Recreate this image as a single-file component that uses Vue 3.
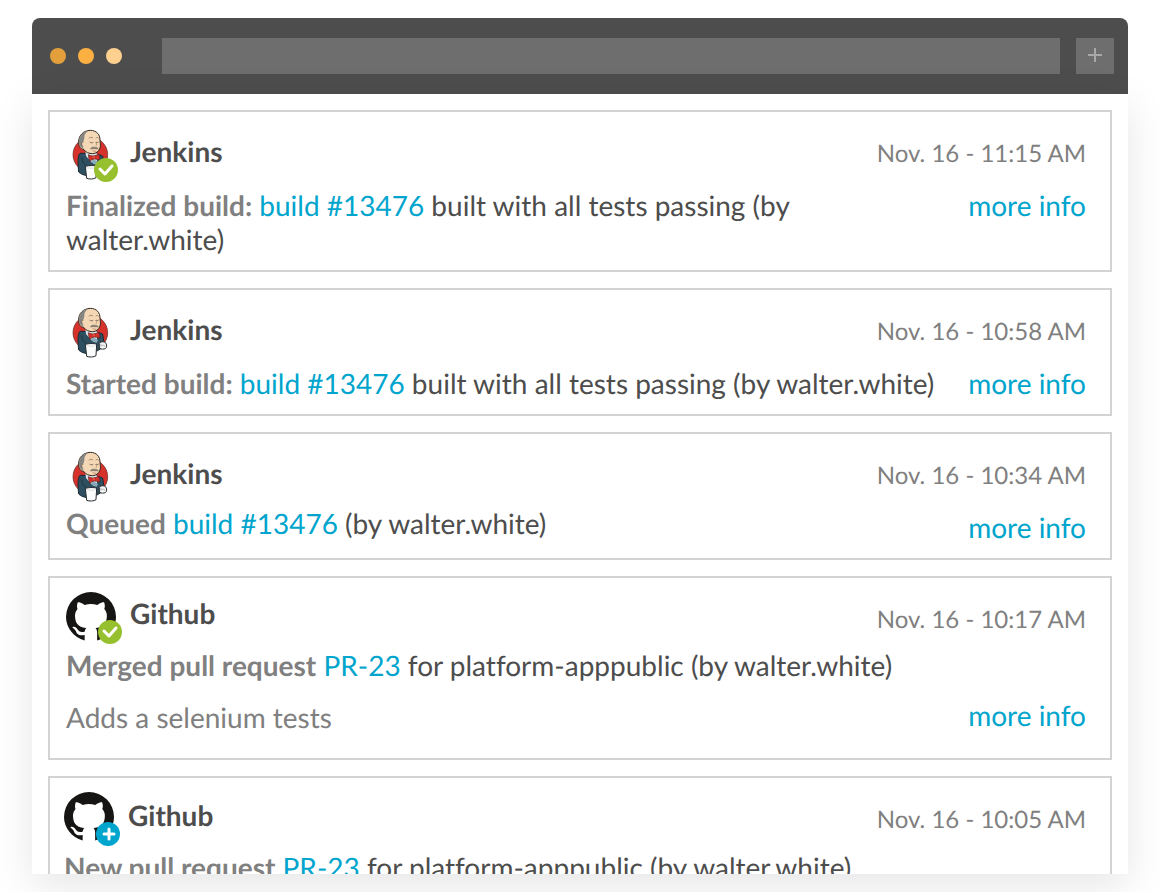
<script setup>
const events = [
  {
    id: 1, source: 'Jenkins', icon: 'jenkins', badge: 'check', variant: 'build',
    time: 'Nov. 16 - 11:15 AM', action: 'Finalized build:', ref: 'build #13476',
    detail: 'built with all tests passing (by walter.white)'
  },
  {
    id: 2, source: 'Jenkins', icon: 'jenkins', variant: 'build',
    time: 'Nov. 16 - 10:58 AM', action: 'Started build:', ref: 'build #13476',
    detail: 'built with all tests passing (by walter.white)'
  },
  {
    id: 3, source: 'Jenkins', icon: 'jenkins', variant: 'queued',
    time: 'Nov. 16 - 10:34 AM', action: 'Queued', ref: 'build #13476',
    detail: '(by walter.white)'
  },
  {
    id: 4, source: 'Github', icon: 'github', badge: 'check', variant: 'merged',
    time: 'Nov. 16 - 10:17 AM', action: 'Merged pull request', ref: 'PR-23',
    detail: 'for platform-apppublic (by walter.white)', note: 'Adds a selenium tests'
  },
  {
    id: 5, source: 'Github', icon: 'github', badge: 'plus', variant: 'opened',
    time: 'Nov. 16 - 10:05 AM', action: 'New pull request', ref: 'PR-23',
    detail: 'for platform-apppublic (by walter.white)'
  }
]
</script>

<template>
  <div class="window">
    <header class="toolbar">
      <div class="lights">
        <span class="light light--dark"></span>
        <span class="light light--mid"></span>
        <span class="light light--pale"></span>
      </div>
      <input class="address" type="text" aria-label="Address" />
      <button class="new-tab" type="button" aria-label="New tab">
        <svg width="14" height="14" viewBox="0 0 14 14" aria-hidden="true">
          <path d="M7 0v14M0 7h14" stroke="#a8a8a8" stroke-width="2" />
        </svg>
      </button>
    </header>

    <main class="feed">
      <article v-for="e in events" :key="e.id" class="card" :class="'card--' + e.variant">
        <div class="head">
          <div class="avatar" :class="'avatar--' + e.icon">
            <svg v-if="e.icon === 'jenkins'" width="52" height="54" viewBox="18 18 156 162" aria-hidden="true">
              <circle cx="91" cy="98" r="52" fill="#d7312b" stroke="#5a2522" stroke-width="2" />
              <path d="M60 94C53 101 53 124 56 150c6 6 14 9 22 10l34-8 14-8 6-16-4-26-16-6-26-2z" fill="#2d4f60" stroke="#1b2b34" stroke-width="3" />
              <path d="M76 86l2 16 18 20 14-2 4-20-8-10z" fill="#dfe6e8" />
              <path d="M56 62c-1-22 14-36 35-37 19 0 29 13 29 29 0 8 3 15 0 24-3 10-12 17-22 17-11 0-21-4-27-13-9 0-15-9-15-20z" fill="#f4d8b6" stroke="#33291f" stroke-width="3" />
              <path d="M57 60c0-18 11-29 27-33-8 6-12 12-11 22l-3 10-4 2 1 9 4 10c-9-2-14-10-14-20z" fill="#858582" />
              <path d="M70 61c-6-2-7 8-1 12" fill="#f4d8b6" stroke="#5b4435" stroke-width="2" />
              <path d="M86 49c4-4 9-4 13-1M107 48c3-2 6-2 9 1" fill="none" stroke="#7a6554" stroke-width="2" />
              <path d="M89 60c4 3 8 3 11 1M108 60c3 2 6 2 8 0" fill="none" stroke="#43372d" stroke-width="2" />
              <path d="M106 60c5 6 6 9 1 11" fill="none" stroke="#9d7353" stroke-width="2" />
              <path d="M91 81c4-7 9-7 14-5 5-1 8 1 10 5-5 0-10 0-13-1-4 0-7 2-11 1z" fill="#8d857a" stroke="#6b6157" stroke-width="1" />
              <path d="M98 86c4 2 7 2 11 1" fill="none" stroke="#a86551" stroke-width="2" />
              <path d="M85 98l14 5 18-6 3 16-17-2-15 6z" fill="#d8302c" stroke="#591f20" stroke-width="2" />
              <rect x="97" y="101" width="9" height="9" rx="2" fill="#ee4b40" stroke="#68201f" />
              <path d="M92 116l12-3 10 8-4 7-10-2z" fill="#8aa9b8" />
              <path d="M66 106c-1 10 3 18 12 24" fill="none" stroke="#1c343f" stroke-width="3" />
              <path d="M118 130c4-7 19-6 21 2 3 9-1 15-7 15-7 1-13 0-14-6z" fill="#f4f5f4" stroke="#303638" stroke-width="3" />
              <path d="M123 131l-1 7 7-3 6 4" fill="none" stroke="#969b9b" stroke-width="2" />
              <path d="M76 133c11-3 24-3 34-1l-2 35c-7 5-20 5-28 2z" fill="#fcfcfc" stroke="#242c30" stroke-width="3" />
              <path d="M79 137c10 2 20 2 28 0" fill="none" stroke="#c5cbcd" stroke-width="2" />
              <path d="M110 138c6-1 8 8 4 13-2 2-4 1-5-1" fill="none" stroke="#3b4448" stroke-width="3" />
            </svg>
            <svg v-else width="50" height="50" viewBox="0 0 16 16" aria-hidden="true">
              <path fill="#161514" d="M8 0A8 8 0 0 0 0 8c0 3.4 2.4 6.5 5.97 7.5v-1.78c-2.01.37-2.53-.49-2.69-.94-.15-.4-.5-.9-.82-1.13-.28-.15-.68-.52-.01-.53.63-.01 1.08.58 1.23.82.72 1.21 1.87.87 2.33.66.07-.52.28-.87.51-1.07-1.78-.2-3.64-.89-3.64-3.95 0-.87.31-1.59.82-2.15-.08-.2-.36-1.02.08-2.12 0 0 .67-.21 2.2.82a7.4 7.4 0 0 1 4 0c1.53-1.04 2.2-.82 2.2-.82.44 1.1.16 1.92.08 2.12.51.56.82 1.27.82 2.15 0 3.07-1.87 3.75-3.65 3.95.29.25.54.73.54 1.48v2.49C13.6 14.5 16 11.4 16 8a8 8 0 0 0-8-8z" />
            </svg>
            <svg v-if="e.badge" class="badge" width="24" height="24" viewBox="0 0 24 24" aria-hidden="true">
              <circle cx="12" cy="12" r="12" :fill="e.badge === 'check' ? '#97c02e' : '#00a5cd'" />
              <path :d="e.badge === 'check' ? 'M6 11l5 5 7-8' : 'M13 7v10M8 12h10'" fill="none" stroke="#fff" stroke-width="3" stroke-linecap="round" stroke-linejoin="round" />
            </svg>
          </div>
          <h2 class="source">{{ e.source }}</h2>
          <time class="time">{{ e.time }}</time>
        </div>
        <div class="body">
          <div class="text">
            <p class="message"><strong>{{ e.action }}</strong> <a href="#">{{ e.ref }}</a> {{ e.detail }}</p>
            <p v-if="e.note" class="note">{{ e.note }}</p>
          </div>
          <a v-if="e.variant !== 'opened'" class="more" href="#">more info</a>
        </div>
      </article>
    </main>
  </div>
</template>

<style>
body {
  background: #fff;
}
</style>

<style scoped>
.window {
  display: flex;
  flex-direction: column;
  box-sizing: border-box;
  height: 100vh;
  padding: 18px 32px;
  overflow: hidden;
  font-family: Lato, "Open Sans", sans-serif;
  font-size: 28px;
  line-height: 34px;
  color: #4d4d4d;
  font-variant-ligatures: none;
  text-rendering: geometricPrecision;
}

.toolbar {
  display: flex;
  align-items: center;
  flex: none;
  box-sizing: border-box;
  height: 76px;
  padding: 0 14px 0 18px;
  background: #4d4d4d;
  border-radius: 8px 8px 0 0;
}

.lights {
  display: flex;
  gap: 12px;
  margin-right: 40px;
}

.light {
  width: 16px;
  height: 16px;
  border-radius: 50%;
}

.light--dark { background: #e29f3b; }
.light--mid { background: #fdb042; }
.light--pale { background: #fdd08f; }

.address {
  flex: 1;
  min-width: 0;
  box-sizing: border-box;
  height: 36px;
  margin: 0 16px 0 0;
  padding: 0 12px;
  border: 0;
  background: #6e6e6e;
  color: #fff;
  font: 20px Lato, sans-serif;
}

.new-tab {
  display: flex;
  align-items: center;
  justify-content: center;
  width: 38px;
  height: 36px;
  padding: 0 0 2px;
  border: 0;
  background: #6e6e6e;
}

.feed {
  flex: 1;
  min-height: 0;
  overflow: hidden;
  display: flex;
  flex-direction: column;
  gap: 16px;
  padding: 16px 16px 0;
  background: #fff;
  box-shadow: 0 12px 40px rgba(0, 0, 0, 0.1);
}

.card {
  flex: none;
  padding: 0 24px 14px 16px;
  border: 2px solid #d3d3d3;
}

.head {
  display: flex;
  align-items: flex-start;
  height: 76px;
}

.avatar {
  position: relative;
  flex: none;
  width: 52px;
  margin: 16px 12px 0 0;
}

.avatar svg {
  display: block;
}

.avatar--github {
  margin-top: 14px;
}

.badge {
  position: absolute;
  right: 0;
  bottom: 0;
}

.avatar--github .badge {
  right: -4px;
  bottom: -2px;
}

.source {
  margin: 22px auto 0 0;
  font-size: 28px;
  font-weight: 700;
}

.time {
  margin-top: 25px;
  font-size: 24px;
  color: #808080;
}

.body {
  display: flex;
  align-items: flex-start;
  gap: 16px;
}

.text {
  flex: 1;
  min-width: 0;
}

.message,
.note {
  margin: 0;
}

.message strong {
  font-weight: 700;
  color: #808080;
}

.note {
  margin-top: 18px;
  color: #808080;
}

a {
  color: #00a5cd;
  text-decoration: none;
}

.more {
  flex: none;
}

.card--queued .head { height: 72px; }
.card--queued .more { margin-top: 4px; }

.card--merged { padding-bottom: 24px; }
.card--merged .head { height: 70px; }
.card--merged .source { margin-top: 18px; }
.card--merged .more { margin-top: 50px; }

.card--opened { padding-left: 14px; padding-bottom: 24px; }
.card--opened .head { height: 72px; }
.card--opened .source { margin-top: 20px; }
.card--opened .avatar .badge { bottom: -4px; }
</style>
